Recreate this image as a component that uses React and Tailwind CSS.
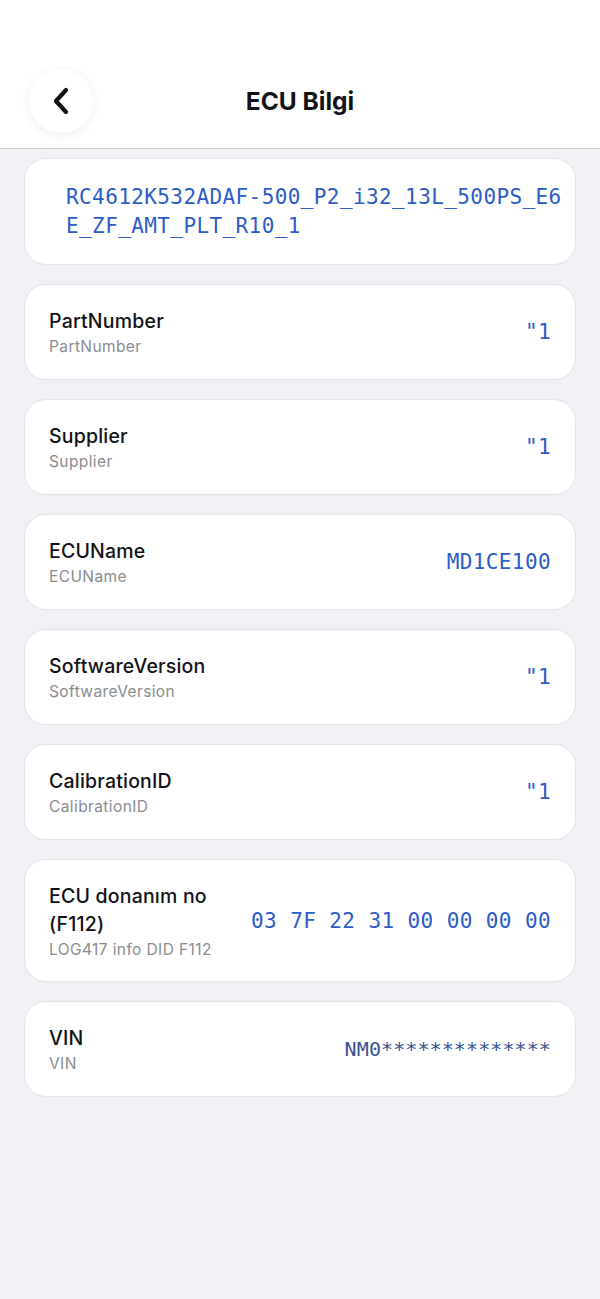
const rows = [
  { title: 'PartNumber', sub: 'PartNumber', value: '"1' },
  { title: 'Supplier', sub: 'Supplier', value: '"1' },
  { title: 'ECUName', sub: 'ECUName', value: 'MD1CE100' },
  { title: 'SoftwareVersion', sub: 'SoftwareVersion', value: '"1' },
  { title: 'CalibrationID', sub: 'CalibrationID', value: '"1' },
  { title: 'ECU donanım no (F112)', sub: 'LOG417 info DID F112', value: '03 7F 22 31 00 00 00 00', tall: true },
]

const mono = { fontFamily: '"DejaVu Sans Mono", "Liberation Mono", monospace' }

function Label({ title, sub, tall }) {
  return (
    <div className={`flex flex-col ${tall ? 'w-[190px]' : ''}`}>
      <div className="text-[19.5px] font-medium leading-[28px] tracking-[0.2px] text-[#111216]">{title}</div>
      <div className="mt-[2px] text-[15.5px] leading-[20px] tracking-[0.4px] text-[#8b8b90]">{sub}</div>
    </div>
  )
}

function Row({ title, sub, value, tall }) {
  return (
    <div
      className={`flex items-center justify-between gap-4 rounded-[22px] border border-[#e3e4e8] bg-white px-6 ${tall ? 'h-[123px]' : 'h-[96px]'}`}
    >
      <Label title={title} sub={sub} tall={tall} />
      <div className="pt-[2px] text-[21px] font-medium tracking-[0.4px] text-[#2c5cc5] whitespace-nowrap" style={mono}>
        {value}
      </div>
    </div>
  )
}

export default function App() {
  return (
    <div className="min-h-[1299px] bg-[#f0f1f4]" style={{ fontFamily: 'Inter, "Noto Sans", sans-serif' }}>
      <header className="relative flex h-[149px] justify-center border-b border-[#c9cacd] bg-white pt-[69px]">
        <button className="absolute left-[29px] top-[69px] flex h-[64px] w-[64px] items-center justify-center rounded-full bg-white shadow-[0_2px_12px_rgba(0,0,0,0.07)]">
          <svg width="20" height="30" viewBox="0 0 20 30" fill="none">
            <path d="M15 4 L5 15 L15 26" stroke="#111" strokeWidth="4.2" strokeLinecap="round" strokeLinejoin="round" />
          </svg>
        </button>
        <h1 className="flex h-[64px] items-center text-[24.5px] font-bold text-[#111216]">ECU Bilgi</h1>
      </header>

      <main className="flex flex-col gap-[19px] px-6 pt-[9px] pb-10">
        <div className="rounded-[22px] border border-[#e3e4e8] bg-white pl-[41px] pr-[10px] pt-[24px] pb-[23px]">
          <div className="break-all text-[21px] leading-[29px] tracking-[0.4px] text-[#2c5cc5]" style={mono}>
            RC4612K532ADAF-500_P2_i32_13L_500PS_E6E_ZF_AMT_PLT_R10_1
          </div>
        </div>

        {rows.map((r) => (
          <Row key={r.title} {...r} />
        ))}

        <div className="flex h-[96px] items-center justify-between rounded-[22px] border border-[#e3e4e8] bg-white px-6">
          <Label title="VIN" sub="VIN" />
          <div className="text-[20px] tracking-[0.1px] text-[#3a528f]" style={mono}>
            NM0**************
          </div>
        </div>
      </main>
    </div>
  )
}
